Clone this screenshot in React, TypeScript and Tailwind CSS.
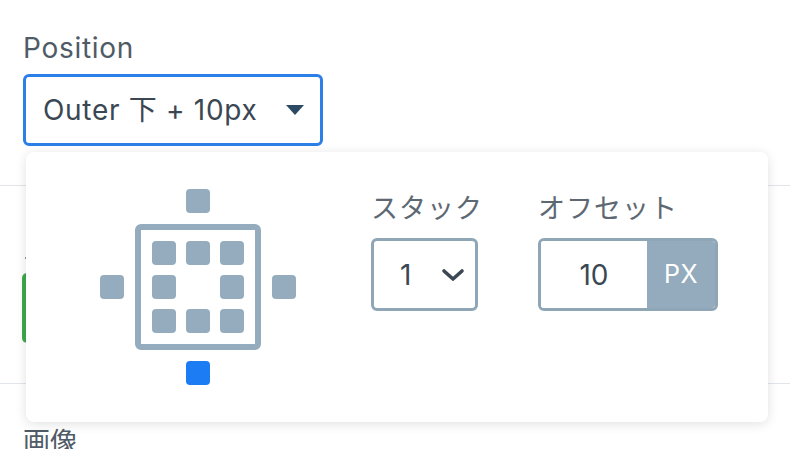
const font = "font-['Inter','Noto_Sans_CJK_JP',sans-serif]";

function Dot({ active }: { active?: boolean }) {
  return <div className={active ? "w-6 h-6 rounded-[4px] bg-[#1c7cf4]" : "w-6 h-6 rounded-[4px] bg-[#94acbd]"} />;
}

function PositionPicker() {
  return (
    <div className="grid grid-cols-[24px_126px_24px] grid-rows-[24px_126px_24px] gap-x-[11px] gap-y-[11px] items-center justify-items-center">
      <div />
      <Dot />
      <div />
      <Dot />
      <div className="w-[126px] h-[126px] border-[6px] border-[#94acbd] rounded-[6px] p-[11px] grid grid-cols-3 gap-[10px]">
        <Dot />
        <Dot />
        <Dot />
        <Dot />
        <div />
        <Dot />
        <Dot />
        <Dot />
        <Dot />
      </div>
      <Dot />
      <div />
      <Dot active />
      <div />
    </div>
  );
}

export default function App() {
  return (
    <div className={`relative w-[790px] h-[449px] overflow-hidden bg-white ${font}`}>
      {/* page behind the popover */}
      <div className="pt-[32px]">
        <div className="px-[23px]">
          <label className="block text-[28px] leading-[32px] tracking-[0.7px] text-[#4f5b66]">Position</label>
          <button className="mt-[10px] w-[300px] h-[72px] border-[3px] border-[#2b7fe6] rounded-[6px] flex items-center pl-[17px] pr-[16px] text-[28px] tracking-[0.7px] text-[#3b4753]">
            <span>Outer 下 + 10px</span>
            <svg className="ml-auto" width="18" height="10" viewBox="0 0 18 10">
              <path d="M0 0h18L9 10z" fill="#2c4a63" />
            </svg>
          </button>
        </div>
        <div className="mt-[39px] border-t border-[#e2e6ea]" />
        <div className="px-[22px] mt-[71px] flex">
          <div className="w-[2px] h-[2px] rounded-full bg-[#6b7680] ml-[3px]" />
        </div>
        <div className="px-[22px] mt-[14px]">
          <div className="w-[80px] h-[70px] rounded-[5px] bg-[#3ea94b]" />
        </div>
        <div className="mt-[40px] border-t border-[#e2e6ea]" />
        <div className="px-[23px] mt-[43px] text-[27px] leading-[32px] text-[#4f5b66]">画像</div>
      </div>

      {/* popover */}
      <div className="absolute left-[26px] top-[152px] w-[742px] h-[270px] bg-white rounded-[8px] shadow-[0_2px_12px_rgba(0,0,0,0.12)] flex pl-[74px] pt-[37px]">
        <PositionPicker />
        <div className="ml-[75px] pt-[4px] flex gap-[60px]">
          <div className="w-[107px]">
            <div className="text-[27px] leading-[32px] text-[#5d6873] tracking-[1px] whitespace-nowrap">スタック</div>
            <div className="mt-[13px] w-[107px] h-[73px] border-[3px] border-[#8fa6b7] rounded-[6px] flex items-center pl-[26px] text-[28px] text-[#3b4753]">
              <span>1</span>
              <svg className="ml-[30px]" width="24" height="14" viewBox="0 0 24 14">
                <path d="M3 3l9 8 9-8" fill="none" stroke="#3b4753" strokeWidth="3.6" strokeLinecap="round" strokeLinejoin="round" />
              </svg>
            </div>
          </div>
          <div>
            <div className="text-[27px] leading-[32px] text-[#5d6873] tracking-[1px] whitespace-nowrap">オフセット</div>
            <div className="mt-[13px] w-[180px] h-[73px] border-[3px] border-[#8fa6b7] rounded-[6px] flex overflow-hidden">
              <div className="flex-1 flex items-center justify-center text-[28px] text-[#3b4753] bg-white">10</div>
              <div className="w-[68px] bg-[#93abbd] flex items-center justify-center text-[25px] tracking-[0.5px] text-white">PX</div>
            </div>
          </div>
        </div>
      </div>
    </div>
  );
}
